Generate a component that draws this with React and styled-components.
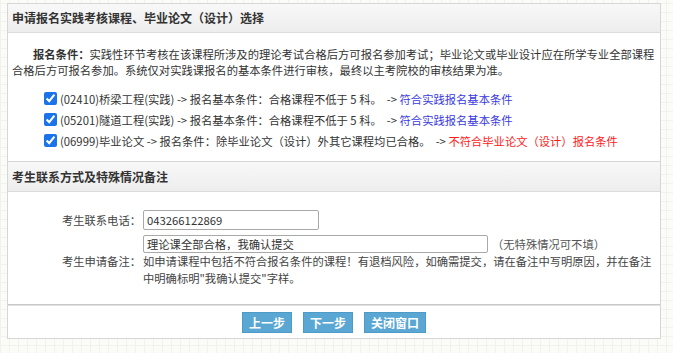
import React from 'react';
import styled, { createGlobalStyle } from 'styled-components';

const GlobalStyle = createGlobalStyle`
  html, body {
    margin: 0;
    padding: 0;
  }
  body {
    font-family: "Microsoft YaHei", "Noto Sans CJK SC", "Noto Sans", sans-serif;
    font-size: 11.3px;
    color: #333;
    background-color: #fbfbf8;
    background-image:
      repeating-linear-gradient(0deg, #f1f1ee 0 1px, transparent 1px 9px),
      repeating-linear-gradient(90deg, #f1f1ee 0 1px, transparent 1px 9px);
    min-height: 353px;
  }
`;

const Page = styled.div`
  padding: 3px 12px 16px 7px;
`;

const Panel = styled.div`
  width: 652px;
  background: #fff;
  border: 1px solid #d6d6d6;
`;

const SectionHeader = styled.div`
  height: 28px;
  line-height: 28px;
  padding-left: 4px;
  font-size: 12px;
  font-weight: bold;
  color: #333;
  background: linear-gradient(#f8f8f8, #ededed);
  border-bottom: 1px solid #dcdcdc;
  ${(p) => p.$divided && 'border-top: 1px solid #d6d6d6; height: 29px; line-height: 29px;'}
`;

const Rules = styled.div`
  padding: 13px 0 10px 4px;
`;

const RuleText = styled.p`
  margin: 0;
  line-height: 16px;
  text-indent: 21px;
  b {
    font-weight: bold;
    color: #333;
  }
`;

const CourseList = styled.ul`
  list-style: none;
  margin: 10px 0 0;
  padding: 0 0 0 32px;
`;

const Course = styled.li`
  display: flex;
  align-items: center;
  height: 21px;
  white-space: pre;
  input {
    width: 13px;
    height: 13px;
    margin: 0 3px 0 0;
    accent-color: #1a73e8;
  }
`;

const Verdict = styled.span`
  color: ${(p) => (p.$ok ? '#3b3be0' : '#ff1a1a')};
`;

const Form = styled.div`
  display: grid;
  grid-template-columns: 133px 1fr;
  column-gap: 2px;
  row-gap: 5px;
  padding: 18px 0 17px 0;
`;

const Label = styled.div`
  text-align: right;
  align-self: center;
  color: #444;
`;

const Field = styled.div`
  display: flex;
  flex-direction: column;
`;

const InputRow = styled.div`
  display: flex;
  align-items: center;
  gap: 4px;
  color: #555;
`;

const TextInput = styled.input`
  box-sizing: border-box;
  width: ${(p) => p.$w}px;
  height: ${(p) => p.$h}px;
  padding: 0 3px;
  border: 1px solid #a9a9a9;
  border-radius: 2px;
  font: inherit;
  color: #333;
  outline: none;
`;

const Note = styled.div`
  width: 512px;
  line-height: 17px;
  color: #444;
`;

const ButtonBar = styled.div`
  display: flex;
  justify-content: center;
  gap: 11px;
  padding: 7px 0 5px;
  border-top: 1px solid #c8c8c8;
  box-shadow: inset 0 1px 0 #e2e2e2;
`;

const Button = styled.button`
  height: 21px;
  padding: 0 6px;
  border: 1px solid #4f9bc8;
  background: #5aa7d3;
  color: #fff;
  font-family: inherit;
  font-size: 12px;
  font-weight: bold;
  line-height: 19px;
  cursor: pointer;
`;

const courses = [
  { code: '(02410)桥梁工程(实践)', cond: '报名基本条件：合格课程不低于 5 科。', ok: true, result: '符合实践报名基本条件' },
  { code: '(05201)隧道工程(实践)', cond: '报名基本条件：合格课程不低于 5 科。', ok: true, result: '符合实践报名基本条件' },
  { code: '(06999)毕业论文', cond: '报名条件：除毕业论文（设计）外其它课程均已合格。', ok: false, result: '不符合毕业论文（设计）报名条件' },
];

export default function App() {
  return (
    <Page>
      <GlobalStyle />
      <Panel>
        <SectionHeader>申请报名实践考核课程、毕业论文（设计）选择</SectionHeader>
        <Rules>
          <RuleText>
            <b>报名条件：</b>实践性环节考核在该课程所涉及的理论考试合格后方可报名参加考试；毕业论文或毕业设计应在所学专业全部课程合格后方可报名参加。系统仅对实践课报名的基本条件进行审核，最终以主考院校的审核结果为准。
          </RuleText>
          <CourseList>
            {courses.map((c) => (
              <Course key={c.code}>
                <input type="checkbox" defaultChecked />
                {c.code} -&gt; {c.cond}  -&gt; <Verdict $ok={c.ok}>{c.result}</Verdict>
              </Course>
            ))}
          </CourseList>
        </Rules>
        <SectionHeader $divided>考生联系方式及特殊情况备注</SectionHeader>
        <Form>
          <Label>考生联系电话：</Label>
          <Field>
            <TextInput $w={176} $h={20} defaultValue="043266122869" />
          </Field>
          <Label>考生申请备注：</Label>
          <Field>
            <InputRow>
              <TextInput $w={345} $h={18} defaultValue="理论课全部合格，我确认提交" />
              （无特殊情况可不填）
            </InputRow>
            <Note>
              如申请课程中包括不符合报名条件的课程！有退档风险，如确需提交，请在备注中写明原因，并在备注中明确标明"我确认提交"字样。
            </Note>
          </Field>
        </Form>
        <ButtonBar>
          <Button>上一步</Button>
          <Button>下一步</Button>
          <Button>关闭窗口</Button>
        </ButtonBar>
      </Panel>
    </Page>
  );
}
